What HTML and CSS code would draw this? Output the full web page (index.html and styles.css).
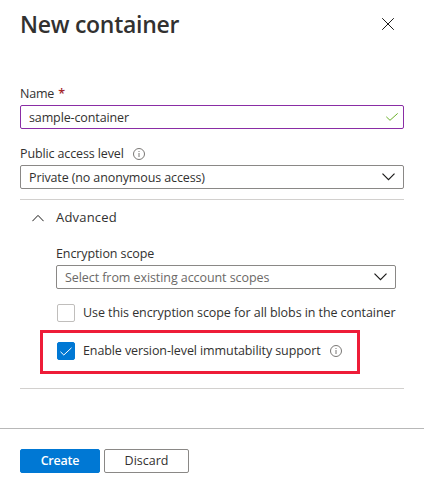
FILE: index.html
```html
<!DOCTYPE html>
<html lang="en">
<head>
<meta charset="utf-8">
<title>New container</title>
<link rel="stylesheet" href="styles.css">
</head>
<body>
<main class="panel">
  <header class="header">
    <h1 class="title">New container</h1>
    <svg class="close" viewBox="0 0 12 12" role="img" aria-label="Close"><path d="M.2.2l11.6 11.6M11.8.2L.2 11.8"/></svg>
  </header>
  <section class="form">
    <div class="label"><span class="t-name">Name</span><span class="required">*</span></div>
    <div class="field field-active"><span class="t-sample">sample-container</span>
      <svg class="valid" viewBox="0 0 12 8"><path d="M.3 3.8l3.7 3.5L11.7.4"/></svg>
    </div>
    <div class="label label-access"><span class="t-public">Public access level</span>
      <svg class="info" viewBox="0 0 12 12"><circle cx="6" cy="6" r="5.5"/><path d="M6 5v4M6 3v1"/></svg>
    </div>
    <div class="field"><span class="t-private">Private (no anonymous access)</span>
      <svg class="chevron" viewBox="0 0 13 8"><path d="M.5.7l6 6 6-6"/></svg>
    </div>
    <section class="advanced">
      <div class="advanced-head">
        <svg class="collapse" viewBox="0 0 12 8"><path d="M.4 7.2L6 1.4l5.6 5.8"/></svg>
        <span class="t-advanced">Advanced</span>
      </div>
      <div class="advanced-body">
        <div class="label"><span class="t-encryption">Encryption scope</span></div>
        <div class="field field-scope"><span class="t-select">Select from existing account scopes</span>
          <svg class="chevron" viewBox="0 0 13 8"><path d="M.5.7l6 6 6-6"/></svg>
        </div>
        <div class="option"><span class="box"></span><span class="t-use">Use this encryption scope for all blobs in the container</span></div>
      </div>
      <div class="highlight">
        <span class="box box-checked"><svg class="tick" viewBox="0 0 12 9"><path d="M.5 4.8l3.3 3.2L11.5.8"/></svg></span>
        <span class="t-enable">Enable version-level immutability support</span>
        <svg class="info" viewBox="0 0 12 12"><circle cx="6" cy="6" r="5.5"/><path d="M6 5v4M6 3v1"/></svg>
      </div>
    </section>
  </section>
  <footer class="footer">
    <button class="button primary"><span class="t-create">Create</span></button>
    <button class="button"><span class="t-discard">Discard</span></button>
  </footer>
</main>
</body>
</html>
```
FILE: styles.css
```css
* { box-sizing: border-box; }
body { margin: 0; background: #fff; color: #323130; font: 12.5px/18px "Open Sans", "Noto Sans", sans-serif; }
svg { display: block; flex: none; fill: none; stroke: #1b1a19; }
span { white-space: nowrap; }
.panel { height: 492px; display: flex; flex-direction: column; }
.header { height: 85px; padding: 8px 30px 0 20px; display: flex; justify-content: space-between; align-items: flex-start; }
.title { margin: 0; font-size: 23px; line-height: 32px; font-weight: 600; letter-spacing: -.27px; }
.close { width: 12px; height: 12px; margin-top: 10px; }
.form { height: 343px; padding: 0 20px; }
.label { height: 20px; display: flex; align-items: flex-start; }
.required { margin-left: 4px; color: #a4262c; font-weight: 600; font-size: 12.5px; }
.field { height: 24px; padding: 0 8px; border: 1px solid #8a8886; border-radius: 2px; display: flex; align-items: center; justify-content: space-between; }
.field > span { padding-top: 1px; }
.field-active { border-color: #8a2da5; padding-right: 5px; }
.valid { width: 12px; height: 8px; stroke: #6bb02a; }
.label-access { height: 20px; margin-top: 16px; }
.info { width: 12px; height: 12px; margin: 3px 0 0 9px; stroke: #797775; stroke-width: 1; }
.chevron { width: 13px; height: 8px; stroke-width: 1.2; }
.advanced { height: 190px; margin-top: 10px; border-top: 1px solid #d2d0ce; border-bottom: 1px solid #d2d0ce; }
.advanced-head { height: 45px; padding: 8px 0 0 12px; display: flex; }
.collapse { width: 12px; height: 8px; margin: 6px 12px 0 0; }
.advanced-body { padding: 0 8px 0 36px; }
.field-scope { color: #6b6967; }
.option { height: 26px; margin-top: 11px; display: flex; align-items: center; padding-left: 1px; gap: 8px; }
.box { width: 18px; height: 18px; border: 1px solid #c0bebc; border-radius: 2px; flex: none; }
.box-checked { display: grid; place-items: center; background: #0078d4; border-color: #0078d4; }
.tick { width: 12px; height: 9px; stroke: #fff; }
.highlight { width: 320px; height: 44px; margin: 4px 0 0 20px; padding: 0 0 2px 14px; border: 3px solid #ee1c38; display: flex; align-items: center; }
.highlight .t-enable { margin-left: 8px; }
.highlight .info { margin-top: 0; }
.footer { flex: 1; border-top: 1px solid #b8b8b8; padding: 20px 20px 0; display: flex; gap: 4px; }
.button { width: 85px; height: 24px; padding: 0; border: 1px solid #8a8886; border-radius: 2px; background: #fff; color: inherit; font: inherit; }
.primary { width: 80px; background: #0078d4; border-color: #0078d4; color: #fff; font-weight: 600; }
.t-name, .t-create { letter-spacing: -.2px; }
.t-sample, .t-public, .t-private { letter-spacing: -.12px; }
.t-advanced { font-size: 13px; letter-spacing: .2px; }
.t-encryption, .t-enable { letter-spacing: -.1px; }
.t-select, .t-use { letter-spacing: -.075px; }
```
